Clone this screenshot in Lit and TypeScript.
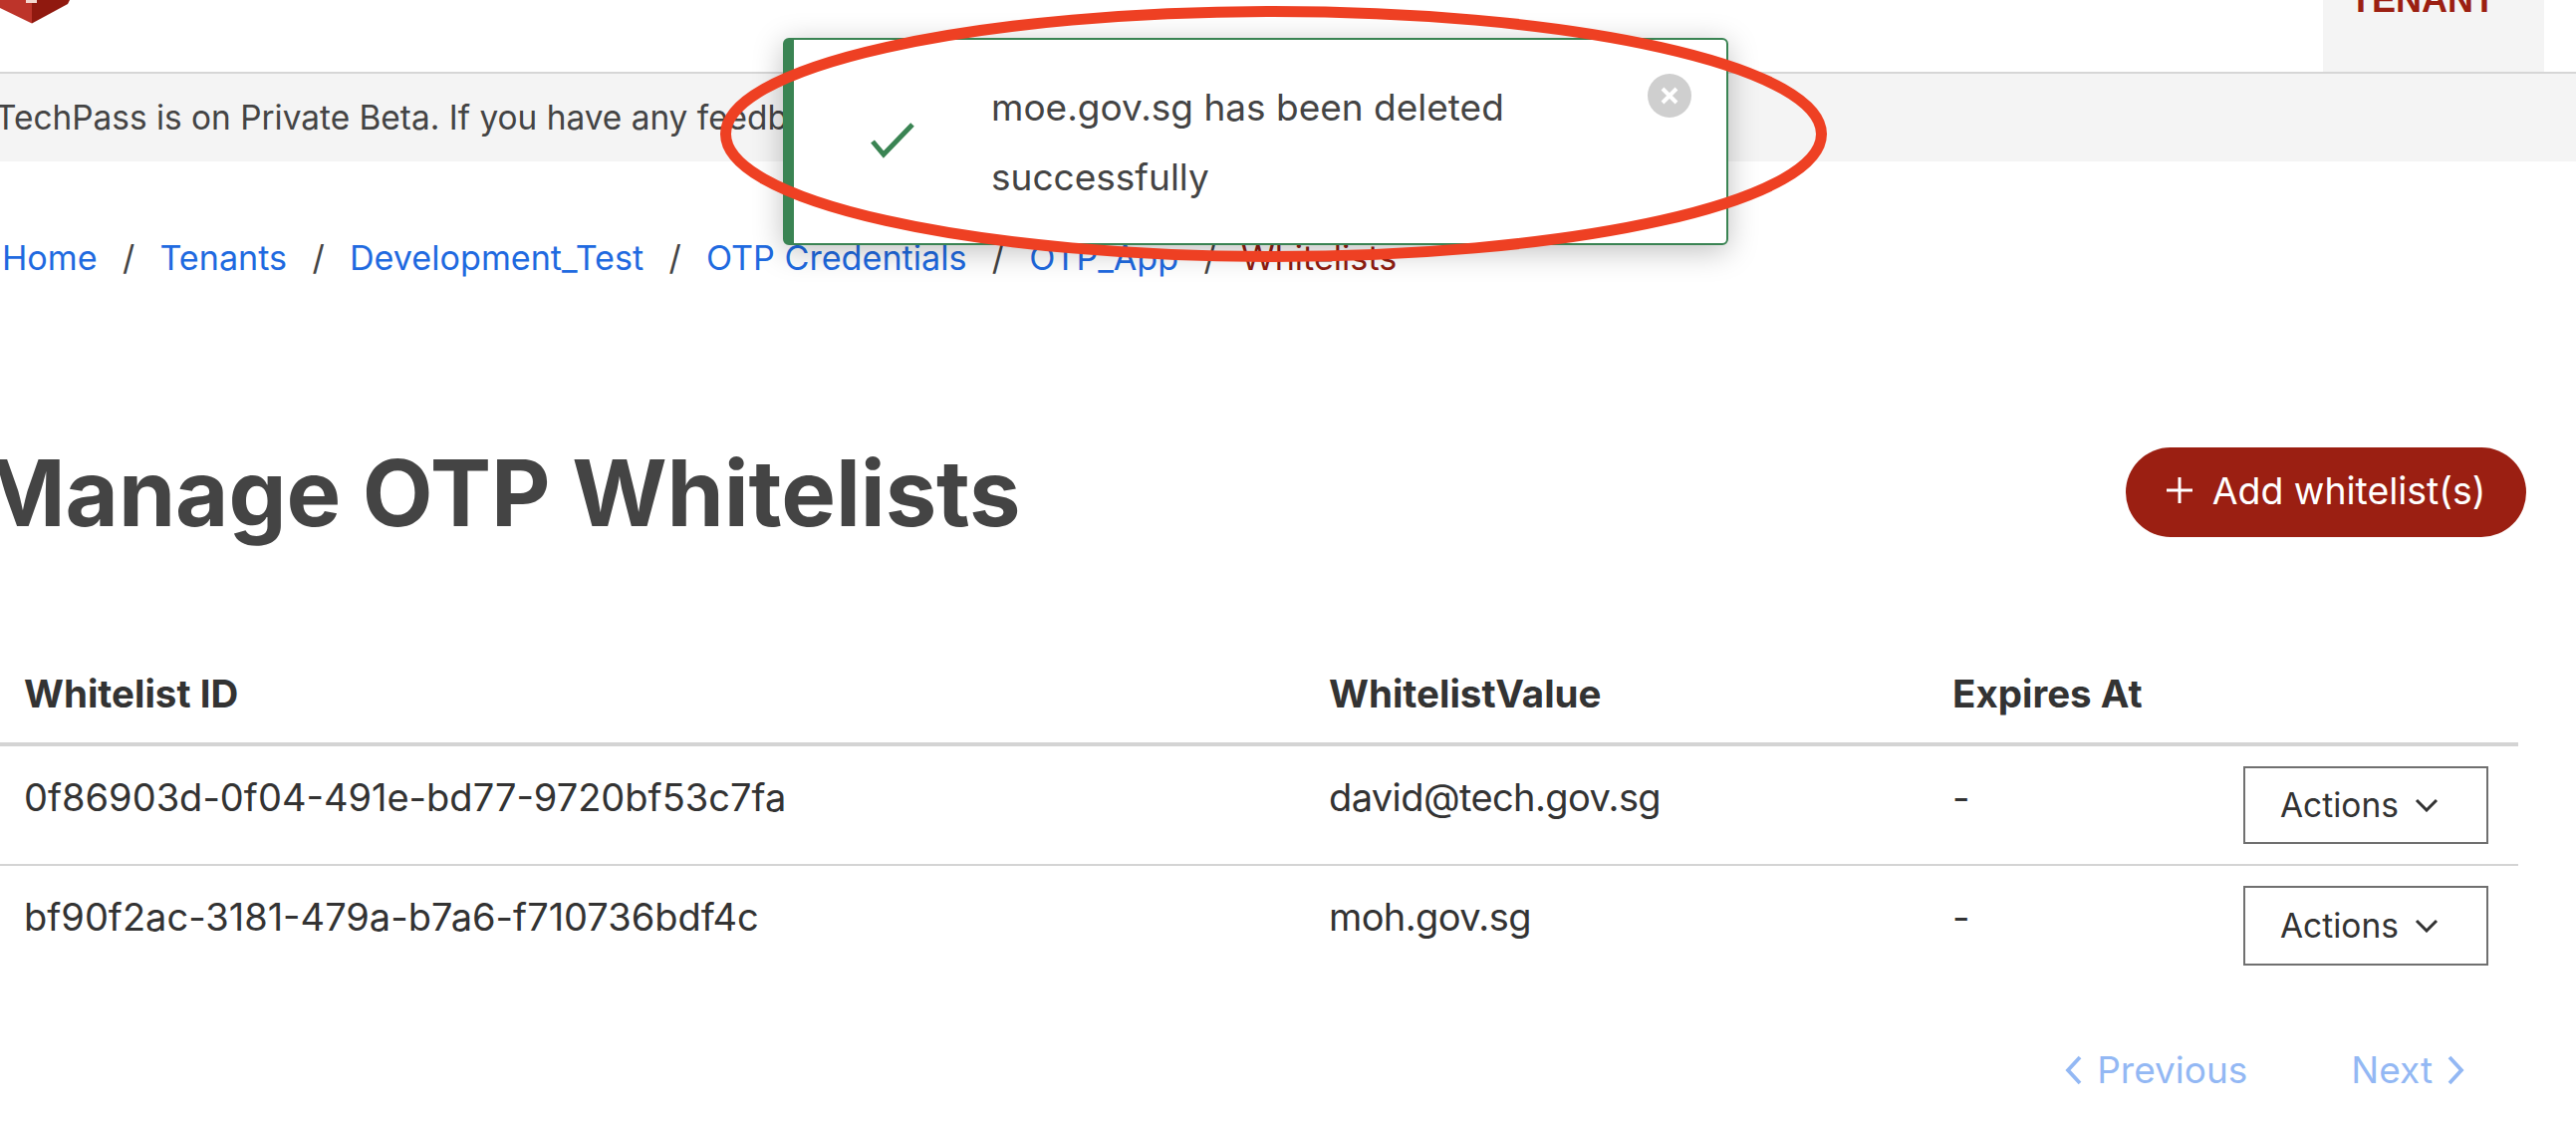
import { LitElement, html, css } from "lit";
import { customElement } from "lit/decorators.js";

const chevronDown = html`<svg class="chev" viewBox="0 0 24 14" width="24" height="14"><path d="M2 2l10 10L22 2" fill="none" stroke="#333" stroke-width="3"/></svg>`;

@customElement("app-root")
export class AppRoot extends LitElement {
  static styles = css`
    :host { display: block; width: 2586px; height: 1128px; overflow: hidden; position: relative; background: #fff; font-family: Inter, "Liberation Sans", sans-serif; color: #444; }
    .header { height: 72px; border-bottom: 2px solid #d6d6d6; display: flex; justify-content: space-between; padding-right: 32px; overflow: hidden; }
    .logo { width: 70px; height: 26px; display: block; }
    .tenant { width: 222px; height: 72px; padding-left: 27px; box-sizing: border-box; background: #f4f4f4; color: #9b1f12; font: 700 36px "Liberation Sans", sans-serif; line-height: 22px; overflow: hidden; }
    .tenant span { display: block; margin-top: -11px; }
    .banner { height: 88px; background: #f4f4f4; font-size: 33.4px; line-height: 88px; white-space: nowrap; color: #444; margin-left: -5px; }
    .crumbs { display: flex; align-items: center; padding: 72px 0 0 2px; height: 48px; font-size: 34.15px; gap: 25.25px; white-space: nowrap; }
    .crumbs a { color: #1f6ae0; text-decoration: none; }
    .crumbs .cur { color: #8f1d12; }
    .crumbs .sep { color: #444; }
    .title { display: flex; justify-content: space-between; align-items: center; margin: 167px 50px 0 -20px; height: 90px; }
    h1 { margin: 0; font-size: 92px; font-weight: 700; color: #444; white-space: nowrap; letter-spacing: -0.1px; }
    .add { width: 402px; height: 90px; padding: 0 0 4px; border-radius: 45px; background: #9b1f12; color: #fff; font-size: 37.4px; display: flex; align-items: center; justify-content: center; gap: 20px; border: 0; font-family: inherit; }
    .table { width: 2528px; margin-top: 134px; }
    .row { display: grid; grid-template-columns: 1334px 626px 1fr auto; box-sizing: border-box; align-items: start; }
    .row > .first { padding-left: 24px; }
    .head { height: 76px; font-size: 38.5px; font-weight: 700; color: #333; border-bottom: 4px solid #d4d4d4; }
    .body { height: 120px; font-size: 38px; color: #333; border-bottom: 2px solid #d4d4d4; }
    .body:last-child { border-bottom: 0; }
    .cell { padding-top: 28px; }
    .val { letter-spacing: -0.6px; }
    .act { padding: 20px 30px 0 0; }
    .actions { width: 246px; height: 78px; padding: 0 0 0 35px; border: 2px solid #707070; background: #fff; color: #333; font: inherit; font-size: 33.5px; display: flex; align-items: center; gap: 16px; box-sizing: border-box; }
    .body:last-child .actions { height: 80px; }
    .pager { display: flex; justify-content: flex-end; gap: 104px; padding: 0 112px 0 0; font-size: 37px; color: #93b8f4; margin-top: 62px; }
    .pager span { display: flex; align-items: center; gap: 14px; }
    .toast { position: absolute; left: 786px; top: 38px; width: 949px; height: 208px; box-sizing: border-box; background: #fff; border: 2px solid #3a8453; border-left-width: 11px; border-radius: 6px; box-shadow: 0 6px 30px rgba(0,0,0,.25); }
    .check { position: absolute; left: 77px; top: 83px; }
    .msg { position: absolute; left: 198px; top: 33px; font-size: 37px; line-height: 70px; color: #444; width: 600px; }
    .close { position: absolute; right: 35px; top: 34px; width: 44px; height: 44px; }
    .ring { position: absolute; left: 720px; top: 0; pointer-events: none; }
  `;

  render() {
    return html`
      <div class="header">
        <svg class="logo" viewBox="0 0 70 26"><path d="M0 0V8L32 23.500V0Z" fill="#bd342a"/><path d="M32 0V23.500L68 4L70 0Z" fill="#90190f"/><path d="M26 0H37V3H26Z" fill="#f3d8d0"/></svg>
        <div class="tenant"><span>TENANT</span></div>
      </div>
      <div class="banner">TechPass is on Private Beta. If you have any feedback, please let us know.</div>
      <div class="crumbs">
        <a>Home</a><span class="sep">/</span><a>Tenants</a><span class="sep">/</span><a>Development_Test</a><span class="sep">/</span><a>OTP Credentials</a><span class="sep">/</span><a>OTP_App</a><span class="sep">/</span><span class="cur">Whitelists</span>
      </div>
      <div class="title">
        <h1>Manage OTP Whitelists</h1>
        <button class="add"><svg width="26" height="26" viewBox="0 0 26 26"><path d="M13 0V26M0 13H26" stroke="#fff" stroke-width="3"/></svg>Add whitelist(s)</button>
      </div>
      <div class="table">
        <div class="row head"><div class="first">Whitelist ID</div><div>WhitelistValue</div><div>Expires At</div></div>
        <div class="row body"><div class="cell first">0f86903d-0f04-491e-bd77-9720bf53c7fa</div><div class="cell val">david@tech.gov.sg</div><div class="cell">-</div><div class="act"><button class="actions">Actions ${chevronDown}</button></div></div>
        <div class="row body"><div class="cell first">bf90f2ac-3181-479a-b7a6-f710736bdf4c</div><div class="cell val">moh.gov.sg</div><div class="cell">-</div><div class="act"><button class="actions">Actions ${chevronDown}</button></div></div>
      </div>
      <div class="pager">
        <span><svg width="18" height="30" viewBox="0 0 18 30"><path d="M15 2L3 15l12 13" fill="none" stroke="#93b8f4" stroke-width="3.800"/></svg>Previous</span>
        <span>Next<svg width="18" height="30" viewBox="0 0 18 30"><path d="M3 2l12 13L3 28" fill="none" stroke="#93b8f4" stroke-width="3.800"/></svg></span>
      </div>
      <div class="toast">
        <svg class="check" width="44" height="36" viewBox="0 0 44 36"><path d="M2 19l11 13L42 2" fill="none" stroke="#3a8453" stroke-width="5"/></svg>
        <div class="msg">moe.gov.sg has been deleted successfully</div>
        <svg class="close" viewBox="0 0 44 44"><circle cx="22" cy="22" r="22" fill="#cfcfcf"/><path d="M15 15l14 14M29 15L15 29" stroke="#fff" stroke-width="4"/></svg>
      </div>
      <svg class="ring" width="1120" height="270" viewBox="0 0 1120 270">
        <ellipse cx="558.500" cy="134.500" rx="550" ry="123" fill="none" stroke="#ee4023" stroke-width="11"/>
      </svg>
    `;
  }
}
